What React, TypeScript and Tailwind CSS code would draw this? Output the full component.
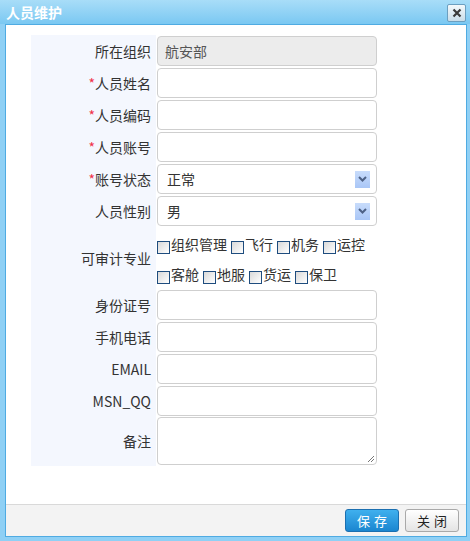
import React from 'react';

const font = { fontFamily: '"Noto Sans CJK SC", "Noto Sans", sans-serif' };

const Label = ({ text, required }: { text: string; required?: boolean }) => (
  <div className="w-[125px] h-full flex items-center justify-end pr-[5px] bg-[#f4f7fe] text-[14px] text-[#333]">
    {required && <span className="text-[#f0324a]">*</span>}
    {text}
  </div>
);

const TextInput = ({ value, disabled }: { value?: string; disabled?: boolean }) => (
  <div
    className={`w-[220px] h-[30px] rounded-[4px] border border-[#cfcfcf] flex items-center px-[7px] text-[14px] text-[#555] ${
      disabled ? 'bg-[#ececec]' : 'bg-white'
    }`}
  >
    {value}
  </div>
);

const SelectInput = ({ value }: { value: string }) => (
  <div className="w-[220px] h-[30px] rounded-[4px] border border-[#cfcfcf] bg-white flex items-center justify-between pl-[9px] pr-[6px] text-[14px] text-[#333]">
    <span>{value}</span>
    <div className="w-[15px] h-[17px] bg-gradient-to-b from-[#c8dcfb] to-[#a9c6f6] flex items-center justify-center">
      <svg width="9" height="6" viewBox="0 0 9 6">
        <path d="M1 1 L4.5 4.5 L8 1" stroke="#4d6185" strokeWidth="2" fill="none" />
      </svg>
    </div>
  </div>
);

const Row = ({ label, required, children }: { label: string; required?: boolean; children: React.ReactNode }) => (
  <div className="flex h-[32px]">
    <Label text={label} required={required} />
    <div className="flex items-center pl-[1px]">{children}</div>
  </div>
);

const Check = ({ text }: { text: string }) => (
  <span className="flex items-center mr-[4px]">
    <span className="w-[13px] h-[13px] mt-[7px] border border-[#1e4c7e] bg-gradient-to-br from-[#d9d9d9] to-[#ffffff]" />
    <span className="ml-[1px]">{text}</span>
  </span>
);

export default function App() {
  return (
    <div style={font} className="w-[470px] h-[541px] bg-[#8fd0f5] flex flex-col overflow-hidden">
      <div className="h-[24px] shrink-0 bg-gradient-to-b from-[#a8ddf8] to-[#7ac8f2] flex items-center justify-between pl-[6px] pr-[4px]">
        <span className="text-white font-bold text-[14px] leading-none">人员维护</span>
        <div className="w-[19px] h-[18px] mt-[1px] rounded-[2px] border border-[#6c9fc0] bg-gradient-to-b from-[#f4f9fc] to-[#c9dde9] flex items-center justify-center">
          <svg width="10" height="10" viewBox="0 0 10 10">
            <path d="M1.5 1.5 L8.5 8.5 M8.5 1.5 L1.5 8.5" stroke="#3a3a3a" strokeWidth="2.2" />
          </svg>
        </div>
      </div>

      <div className="ml-[5px] mr-[3px] mb-[4px] flex-1 flex flex-col bg-white border border-[#4fabe2]">
        <div className="flex-1 pl-[25px] pt-[10px]">
          <Row label="所在组织">
            <TextInput value="航安部" disabled />
          </Row>
          <Row label="人员姓名" required>
            <TextInput />
          </Row>
          <Row label="人员编码" required>
            <TextInput />
          </Row>
          <Row label="人员账号" required>
            <TextInput />
          </Row>
          <Row label="账号状态" required>
            <SelectInput value="正常" />
          </Row>
          <Row label="人员性别">
            <SelectInput value="男" />
          </Row>
          <div className="flex h-[62px]">
            <Label text="可审计专业" />
            <div className="pl-[1px] pt-[2px] w-[222px] text-[14px] text-[#333] leading-[30px]">
              <div className="flex h-[30px]">
                <Check text="组织管理" />
                <Check text="飞行" />
                <Check text="机务" />
                <Check text="运控" />
              </div>
              <div className="flex h-[30px]">
                <Check text="客舱" />
                <Check text="地服" />
                <Check text="货运" />
                <Check text="保卫" />
              </div>
            </div>
          </div>
          <Row label="身份证号">
            <TextInput />
          </Row>
          <Row label="手机电话">
            <TextInput />
          </Row>
          <Row label="EMAIL">
            <TextInput />
          </Row>
          <Row label="MSN_QQ">
            <TextInput />
          </Row>
          <div className="flex h-[49px]">
            <Label text="备注" />
            <div className="pl-[1px]">
              <div className="w-[220px] h-[48px] rounded-[4px] border border-[#cfcfcf] bg-white relative">
                <svg className="absolute right-[1px] bottom-[1px]" width="8" height="8" viewBox="0 0 8 8">
                  <path d="M7 1 L1 7 M7 4 L4 7" stroke="#777" strokeWidth="1" />
                </svg>
              </div>
            </div>
          </div>
        </div>

        <div className="h-[32px] shrink-0 bg-[#f3f3f3] border-t border-[#d9d9d9] flex items-center justify-end gap-[6px] pr-[7px]">
          <button className="w-[54px] h-[23px] rounded-[3px] border border-[#1b6fb0] bg-gradient-to-b from-[#3fb0ee] to-[#1a86d0] text-white text-[13px] tracking-[4px] pl-[4px]">
            保存
          </button>
          <button className="w-[54px] h-[23px] rounded-[3px] border border-[#a9a9a9] bg-gradient-to-b from-[#ffffff] to-[#e4e4e4] text-[#222] text-[13px] tracking-[4px] pl-[4px]">
            关闭
          </button>
        </div>
      </div>
    </div>
  );
}
